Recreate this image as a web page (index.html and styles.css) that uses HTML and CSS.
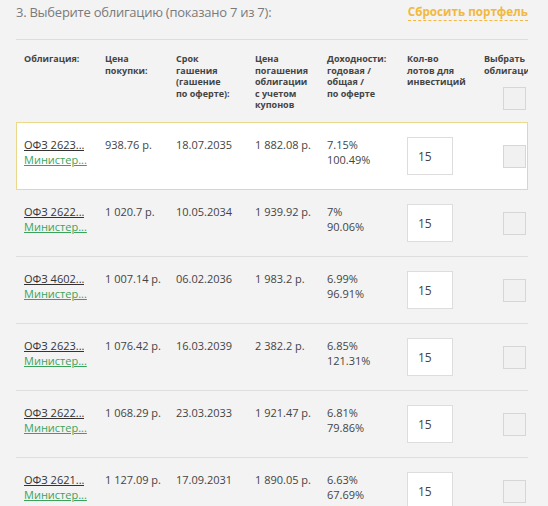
FILE: index.html
```html
<!DOCTYPE html>
<html>
<head>
    <title>Выбор облигаций</title>
    <link rel="stylesheet" href="styles.css">
</head>
<body>
    <div class="bonds">
        <div class="bonds-top">
            <h3 class="bonds-title">3. Выберите облигацию (показано 7 из 7):</h3>
            <a class="reset-link" href="#">Сбросить портфель</a>
        </div>

        <div class="bonds-head bonds-grid">
            <div>Облигация:</div>
            <div>Цена<br>покупки:</div>
            <div>Срок<br>гашения<br>(гашение<br>по оферте):</div>
            <div>Цена<br>погашения<br>облигации<br>с учетом<br>купонов</div>
            <div>Доходности:<br>годовая /<br>общая /<br>по оферте</div>
            <div>Кол-во<br>лотов для<br>инвестиций</div>
            <div class="head-pick">
                <span>Выбрать<br>облигации</span>
                <span class="pick-box"></span>
            </div>
        </div>

        <div class="bond-row bonds-grid active">
            <div class="bond-name">
                <a class="bond-code" href="#">ОФЗ 2623...</a>
                <a class="bond-issuer" href="#">Министер...</a>
            </div>
            <div>938.76 р.</div>
            <div>18.07.2035</div>
            <div>1&nbsp;882.08 р.</div>
            <div>7.15%<br>100.49%</div>
            <div><input class="lots" type="text" value="15"></div>
            <div class="pick"><span class="pick-box"></span></div>
        </div>

        <div class="bond-row bonds-grid">
            <div class="bond-name">
                <a class="bond-code" href="#">ОФЗ 2622...</a>
                <a class="bond-issuer" href="#">Министер...</a>
            </div>
            <div>1&nbsp;020.7 р.</div>
            <div>10.05.2034</div>
            <div>1&nbsp;939.92 р.</div>
            <div>7%<br>90.06%</div>
            <div><input class="lots" type="text" value="15"></div>
            <div class="pick"><span class="pick-box"></span></div>
        </div>

        <div class="bond-row bonds-grid">
            <div class="bond-name">
                <a class="bond-code" href="#">ОФЗ 4602...</a>
                <a class="bond-issuer" href="#">Министер...</a>
            </div>
            <div>1&nbsp;007.14 р.</div>
            <div>06.02.2036</div>
            <div>1&nbsp;983.2 р.</div>
            <div>6.99%<br>96.91%</div>
            <div><input class="lots" type="text" value="15"></div>
            <div class="pick"><span class="pick-box"></span></div>
        </div>

        <div class="bond-row bonds-grid">
            <div class="bond-name">
                <a class="bond-code" href="#">ОФЗ 2623...</a>
                <a class="bond-issuer" href="#">Министер...</a>
            </div>
            <div>1&nbsp;076.42 р.</div>
            <div>16.03.2039</div>
            <div>2&nbsp;382.2 р.</div>
            <div>6.85%<br>121.31%</div>
            <div><input class="lots" type="text" value="15"></div>
            <div class="pick"><span class="pick-box"></span></div>
        </div>

        <div class="bond-row bonds-grid">
            <div class="bond-name">
                <a class="bond-code" href="#">ОФЗ 2622...</a>
                <a class="bond-issuer" href="#">Министер...</a>
            </div>
            <div>1&nbsp;068.29 р.</div>
            <div>23.03.2033</div>
            <div>1&nbsp;921.47 р.</div>
            <div>6.81%<br>79.86%</div>
            <div><input class="lots" type="text" value="15"></div>
            <div class="pick"><span class="pick-box"></span></div>
        </div>

        <div class="bond-row bonds-grid">
            <div class="bond-name">
                <a class="bond-code" href="#">ОФЗ 2621...</a>
                <a class="bond-issuer" href="#">Министер...</a>
            </div>
            <div>1&nbsp;127.09 р.</div>
            <div>17.09.2031</div>
            <div>1&nbsp;890.05 р.</div>
            <div>6.63%<br>67.69%</div>
            <div><input class="lots" type="text" value="15"></div>
            <div class="pick"><span class="pick-box"></span></div>
        </div>
    </div>
</body>
</html>
```

FILE: styles.css
```css
body {
    margin: 0;
    background-color: #f3f3f3;
    font-family: 'Open Sans', 'Liberation Sans', sans-serif;
    color: #444444;
    overflow: hidden;
}

.bonds {
    width: 512px;
    margin-left: 16px;
    overflow: hidden;
}

/* Заголовок блока */
.bonds-top {
    display: flex;
    justify-content: space-between;
    align-items: flex-start;
    height: 40px;
    border-bottom: 1px solid #dddddd;
    box-sizing: border-box;
}

.bonds-title {
    margin: 0;
    padding-top: 2px;
    font-size: 13px;
    font-weight: normal;
    letter-spacing: -0.25px;
    line-height: 20px;
    color: #7a7a7a;
}

.reset-link {
    margin-top: 3px;
    font-size: 11.7px;
    font-weight: bold;
    line-height: 17px;
    color: #f2b840;
    text-decoration: none;
    border-bottom: 1px dashed #f2b840;
}

/* Сетка таблицы */
.bonds-grid {
    display: grid;
    grid-template-columns: 81px 71px 79px 72px 80px 77px 42px;
}

.bonds-head {
    height: 82px;
    box-sizing: border-box;
    padding: 13px 0 0 8px;
    font-size: 9px;
    font-weight: bold;
    line-height: 11.5px;
    color: #444444;
}

.head-pick {
    display: flex;
    flex-direction: column;
    white-space: nowrap;
}

.head-pick .pick-box {
    align-self: flex-end;
    margin-top: 11px;
}

.pick-box {
    display: block;
    width: 21px;
    height: 21px;
    border: 1px solid #d6d6d6;
    background-color: #f1f1f1;
}

.bond-row {
    padding: 14px 0 14px 8px;
    border-bottom: 1px solid #dedede;
    font-size: 11px;
    line-height: 15px;
}

.bond-row.active {
    padding-left: 7px;
    background-color: #ffffff;
    border: 1px solid #ecd88a;
}

.bond-name {
    display: flex;
    flex-direction: column;
    align-items: flex-start;
}

.bond-name a {
    max-width: 64px;
    overflow: hidden;
    white-space: nowrap;
    text-overflow: ellipsis;
}

.bond-code {
    color: #333333;
}

.bond-issuer {
    color: #3ba25e;
}

.lots {
    display: block;
    width: 46px;
    height: 38px;
    box-sizing: border-box;
    margin: 0;
    padding: 0 0 0 10px;
    border: 1px solid #dddddd;
    background: #ffffff;
    font-family: 'Open Sans', 'Liberation Sans', sans-serif;
    font-size: 12px;
    color: #444444;
    outline: none;
}

.pick {
    display: flex;
    justify-content: flex-end;
    align-items: center;
}
```
